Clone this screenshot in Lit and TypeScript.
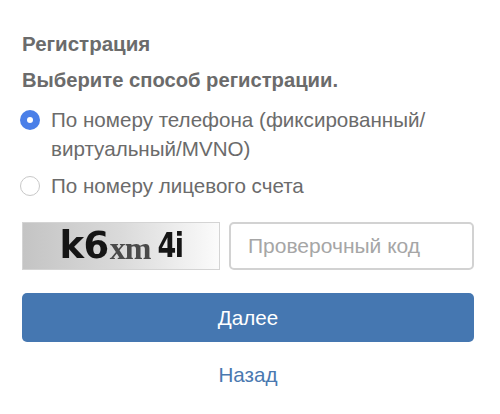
import { LitElement, html, css } from "lit";
import { customElement } from "lit/decorators.js";

@customElement("app-root")
export class AppRoot extends LitElement {
  static styles = css`
    :host {
      display: block;
      width: 500px;
      height: 414px;
      box-sizing: border-box;
      padding: 32px 26px 0 22px;
      background: #fff;
      font-family: "Liberation Sans", Arial, sans-serif;
      color: #6b6b6b;
      font-size: 20.6px;
      overflow: hidden;
    }
    .title {
      font-weight: 700;
      line-height: 24px;
      margin: 0 0 12px;
      font-size: 20.5px;
    }
    .sub {
      font-weight: 700;
      line-height: 24px;
      margin: 0 0 13px;
      font-size: 20.2px;
    }
    .opt {
      display: flex;
      gap: 11px;
      margin-bottom: 8px;
      line-height: 29px;
    }
    .radio {
      flex: none;
      width: 20px;
      height: 20px;
      margin: 4.5px 0 0 -2px;
      border-radius: 50%;
      box-sizing: border-box;
      border: 1.5px solid #c8c8c8;
      background: #fff;
      display: flex;
      align-items: center;
      justify-content: center;
    }
    .radio.on {
      border: none;
      background: #4a7fe8;
    }
    .radio.on::after {
      content: "";
      width: 6px;
      height: 6px;
      border-radius: 50%;
      background: #fff;
    }
    .row {
      display: flex;
      gap: 9px;
      margin-top: 22px;
    }
    .captcha {
      flex: none;
      width: 198px;
      height: 48px;
      box-sizing: border-box;
      border: 1px solid #d4d4d4;
      background: linear-gradient(90deg, #c4c4c4 0%, #dadada 50%, #fbfbfb 100%);
      display: flex;
      align-items: center;
      justify-content: center;
      color: #151515;
      font-family: "DejaVu Sans", sans-serif;
      font-weight: 700;
      overflow: hidden;
      white-space: nowrap;
    }
    .captcha span { filter: blur(0.5px); display: inline-block; }
    .captcha .big { font-size: 37px; line-height: 40px; letter-spacing: -0.5px; }
    .captcha .small {
      font-size: 32px;
      line-height: 40px;
      color: #4a4a4a;
      letter-spacing: -1px;
      transform: translateY(2px);
      font-family: "Liberation Serif", serif;
      margin-left: 1px;
    }
    .captcha .mid {
      font-size: 27px;
      line-height: 40px;
      letter-spacing: -1.5px;
      margin-left: 7px;
      transform: scaleY(1.25);
    }
    .input {
      flex: 1;
      height: 48px;
      box-sizing: border-box;
      border: 2px solid #d2d2d2;
      border-radius: 5px;
      padding-left: 17px;
      display: flex;
      align-items: center;
      color: #a6a6a6;
      font-size: 21px;
    }
    .btn {
      margin-top: 23px;
      height: 49px;
      border-radius: 5px;
      background: #4577b1;
      color: #fff;
      display: flex;
      align-items: center;
      justify-content: center;
    }
    .back {
      margin-top: 20px;
      text-align: center;
      line-height: 26px;
      color: #4a79b0;
    }
  `;

  render() {
    return html`
      <div class="title">Регистрация</div>
      <div class="sub">Выберите способ регистрации.</div>
      <div class="opt">
        <span class="radio on"></span>
        <span>По номеру телефона (фиксированный/<br />виртуальный/MVNO)</span>
      </div>
      <div class="opt">
        <span class="radio"></span>
        <span>По номеру лицевого счета</span>
      </div>
      <div class="row">
        <div class="captcha">
          <span class="big">k6</span><span class="small">xm</span><span class="mid">4i</span>
        </div>
        <div class="input">Проверочный код</div>
      </div>
      <div class="btn">Далее</div>
      <div class="back">Назад</div>
    `;
  }
}
